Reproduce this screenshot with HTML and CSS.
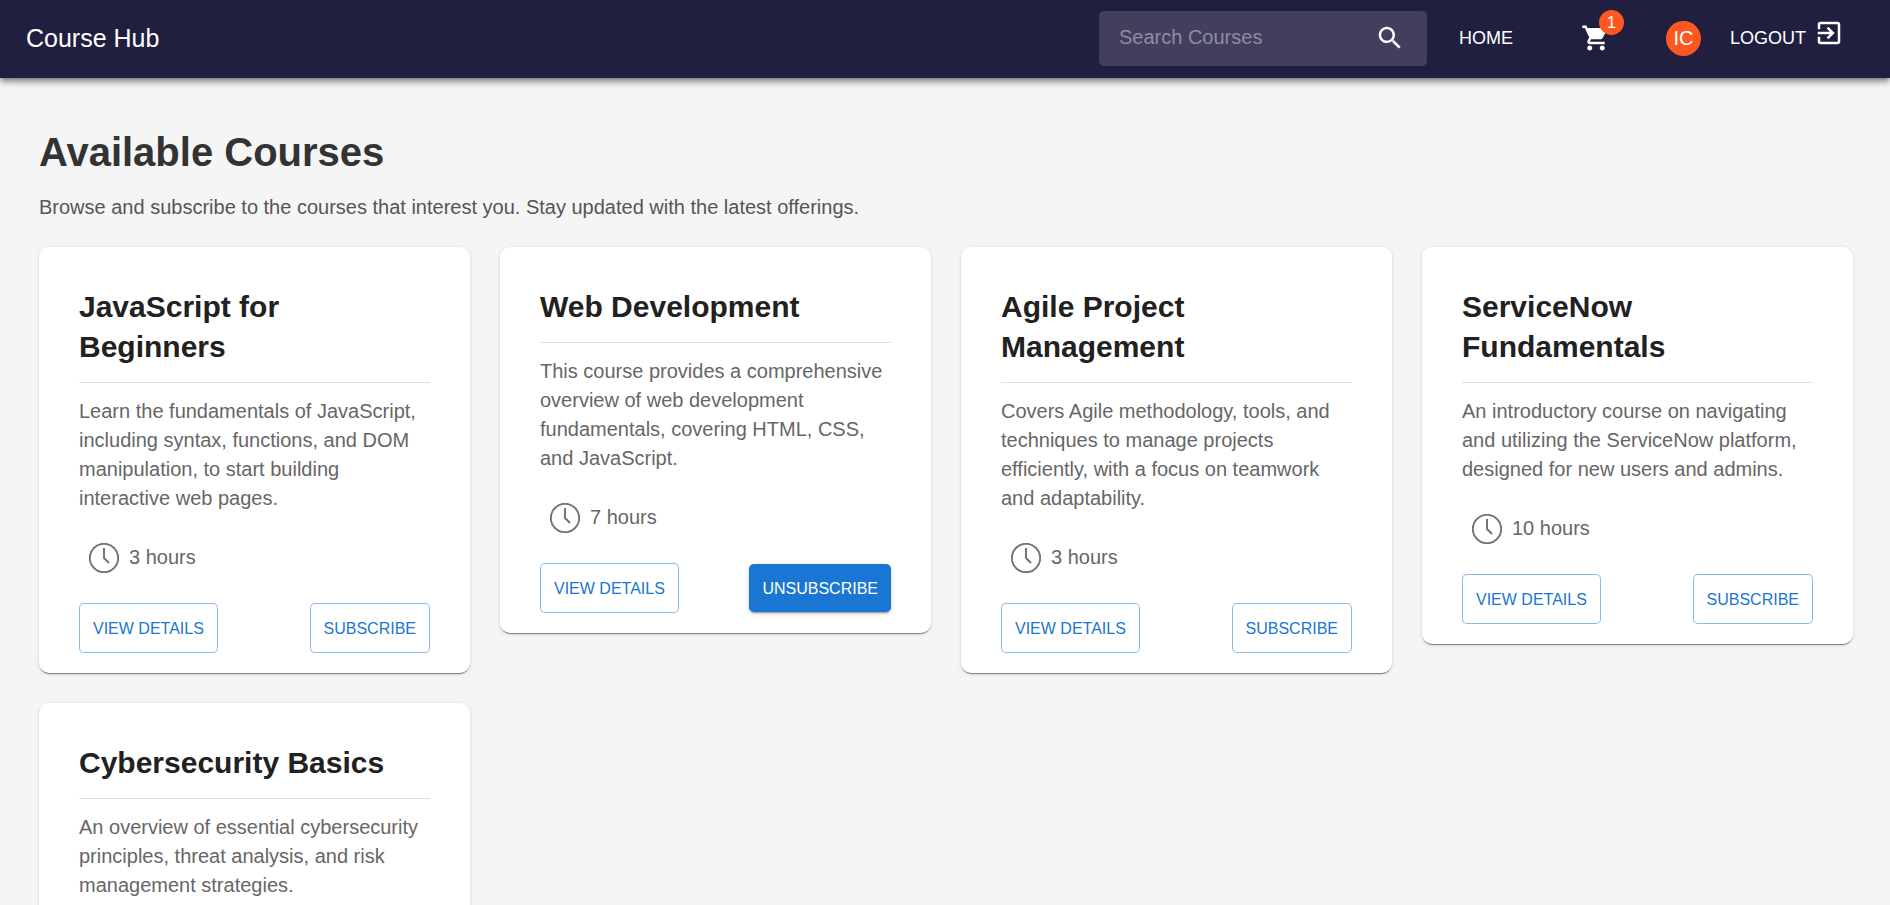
FILE: index.html
```html
<!DOCTYPE html>
<html lang="en">
<head>
<meta charset="utf-8">
<meta name="viewport" content="width=device-width, initial-scale=1">
<title>Course Hub</title>
<link rel="stylesheet" href="styles.css">
</head>
<body>
<svg class="sprite" aria-hidden="true">
  <symbol id="clock" viewBox="0 0 30 30"><circle cx="15" cy="15" r="14.2"/><path d="M15 5v10l5 5"/></symbol>
</svg>
<header class="appbar">
  <a class="brand" href="#">Course Hub</a>
  <form class="search" role="search">
    <input class="search-input" type="text" placeholder="Search Courses" aria-label="Search Courses">
    <button class="icon-button" type="button" aria-label="Search">
      <svg class="icon" viewBox="0 0 24 24"><path d="M15.5 14h-.79l-.28-.27C15.41 12.59 16 11.11 16 9.5 16 5.91 13.09 3 9.5 3S3 5.91 3 9.5 5.91 16 9.5 16c1.61 0 3.09-.59 4.23-1.57l.27.28v.79l5 4.99L20.49 19l-4.99-5zm-6 0C7.01 14 5 11.99 5 9.5S7.01 5 9.5 5 14 7.01 14 9.5 11.99 14 9.5 14z"/></svg>
    </button>
  </form>
  <nav class="nav">
    <a class="nav-link" href="#">HOME</a>
    <a class="cart" href="#" aria-label="Cart">
      <svg class="icon" viewBox="0 0 24 24"><path d="M7 18c-1.1 0-1.99.9-1.99 2S5.9 22 7 22s2-.9 2-2-.9-2-2-2zM1 2v2h2l3.6 7.59-1.35 2.45c-.16.28-.25.61-.25.96 0 1.1.9 2 2 2h12v-2H7.42c-.14 0-.25-.11-.25-.25l.03-.12.9-1.63h7.45c.75 0 1.41-.41 1.75-1.03l3.58-6.49c.08-.14.12-.31.12-.48 0-.55-.45-1-1-1H5.21l-.94-2H1zm16 16c-1.1 0-1.99.9-1.99 2s.89 2 1.99 2 2-.9 2-2-.9-2-2-2z"/></svg>
      <span class="badge">1</span>
    </a>
    <span class="avatar">IC</span>
    <a class="nav-link logout" href="#">LOGOUT
      <svg class="icon" viewBox="0 0 24 24"><path d="M10.09 15.59 11.5 17l5-5-5-5-1.41 1.41L12.67 11H3v2h9.67l-2.58 2.59zM19 3H5c-1.11 0-2 .9-2 2v4h2V5h14v14H5v-4H3v4c0 1.1.89 2 2 2h14c1.1 0 2-.9 2-2V5c0-1.1-.9-2-2-2z"/></svg>
    </a>
  </nav>
</header>
<main class="page">
  <h1 class="page-title">Available Courses</h1>
  <p class="page-intro">Browse and subscribe to the courses that interest you. Stay updated with the latest offerings.</p>
  <div class="grid">
    <article class="card">
      <h2 class="card-title">JavaScript for Beginners</h2>
      <p class="card-text">Learn the fundamentals of JavaScript, including syntax, functions, and DOM manipulation, to start building interactive web pages.</p>
      <div class="duration"><svg class="clock"><use href="#clock"/></svg>3 hours</div>
      <div class="actions"><button class="btn" type="button">VIEW DETAILS</button><button class="btn" type="button">SUBSCRIBE</button></div>
    </article>
    <article class="card">
      <h2 class="card-title">Web Development</h2>
      <p class="card-text">This course provides a comprehensive overview of web development fundamentals, covering HTML, CSS, and JavaScript.</p>
      <div class="duration"><svg class="clock"><use href="#clock"/></svg>7 hours</div>
      <div class="actions"><button class="btn" type="button">VIEW DETAILS</button><button class="btn btn-filled" type="button">UNSUBSCRIBE</button></div>
    </article>
    <article class="card">
      <h2 class="card-title">Agile Project Management</h2>
      <p class="card-text">Covers Agile methodology, tools, and techniques to manage projects efficiently, with a focus on teamwork and adaptability.</p>
      <div class="duration"><svg class="clock"><use href="#clock"/></svg>3 hours</div>
      <div class="actions"><button class="btn" type="button">VIEW DETAILS</button><button class="btn" type="button">SUBSCRIBE</button></div>
    </article>
    <article class="card">
      <h2 class="card-title">ServiceNow Fundamentals</h2>
      <p class="card-text">An introductory course on navigating and utilizing the ServiceNow platform, designed for new users and admins.</p>
      <div class="duration"><svg class="clock"><use href="#clock"/></svg>10 hours</div>
      <div class="actions"><button class="btn" type="button">VIEW DETAILS</button><button class="btn" type="button">SUBSCRIBE</button></div>
    </article>
    <article class="card">
      <h2 class="card-title">Cybersecurity Basics</h2>
      <p class="card-text">An overview of essential cybersecurity principles, threat analysis, and risk management strategies.</p>
    </article>
  </div>
</main>
</body>
</html>
```

FILE: styles.css
```css
* {
  box-sizing: border-box;
}

html {
  scrollbar-width: none;
}

body {
  margin: 0;
  background: #f5f5f5;
  color: #212121;
  font-family: "Liberation Sans", Arial, sans-serif;
  font-size: 20px;
}

button,
input {
  font: inherit;
}

.sprite {
  display: none;
}

.appbar {
  position: sticky;
  top: 0;
  z-index: 1;
  display: flex;
  align-items: center;
  min-height: 78px;
  padding: 0 46px 2px 26px;
  background: #211f40;
  color: #fff;
  box-shadow: 0 2px 5px -1px rgba(0, 0, 0, 0.4), 0 5px 6px rgba(0, 0, 0, 0.2), 0 1px 12px rgba(0, 0, 0, 0.15);
}

.brand {
  color: inherit;
  font-size: 25px;
  line-height: 40px;
  text-decoration: none;
}

.search {
  display: flex;
  align-items: center;
  width: 328px;
  height: 55px;
  margin-left: auto;
  padding: 0 22px 0 20px;
  border-radius: 5px;
  background: #413f5c;
}

.search-input {
  flex: 1;
  min-width: 0;
  padding: 0 0 2px;
  border: 0;
  outline: 0;
  background: none;
  color: #fff;
}

.search-input::placeholder {
  color: #8f8d9f;
}

.icon-button {
  display: flex;
  padding: 0;
  border: 0;
  background: none;
  color: inherit;
}

.icon {
  flex: none;
  width: 30px;
  height: 30px;
  fill: currentColor;
}

.nav {
  display: flex;
  align-items: center;
}

.nav-link {
  margin-left: 32px;
  color: inherit;
  font-size: 18px;
  line-height: 40px;
  text-decoration: none;
}

.cart {
  position: relative;
  display: flex;
  margin-left: 68px;
  color: inherit;
}

.badge {
  position: absolute;
  top: -13px;
  right: -13px;
  width: 25px;
  height: 25px;
  border-radius: 50%;
  background: #ff5722;
  font-size: 16px;
  line-height: 25px;
  text-align: center;
}

.avatar {
  width: 35px;
  height: 35px;
  margin-left: 55px;
  border-radius: 50%;
  background: #ff5722;
  line-height: 35px;
  text-align: center;
}

.logout {
  display: flex;
  gap: 8px;
  margin-left: 29px;
}

.page {
  padding: 46px 37px 45px 39px;
}

.page-title {
  margin: 0;
  color: #333;
  font-size: 40px;
  line-height: 56px;
}

.page-intro {
  margin: 13px 0 26px;
  color: #555;
  line-height: 28px;
}

.grid {
  display: grid;
  grid-template-columns: repeat(4, 1fr);
  align-items: start;
  gap: 30px;
}

.card {
  padding: 40px 40px 20px;
  border-radius: 10px;
  background: #fff;
  box-shadow: 0 2px 1px -1px rgba(0, 0, 0, 0.35), 0 1px 1px rgba(0, 0, 0, 0.14), 0 1px 4px rgba(0, 0, 0, 0.12);
}

.card-title {
  margin: 0;
  padding-bottom: 15px;
  border-bottom: 1px solid #e0e0e0;
  font-size: 30px;
  line-height: 40px;
}

.card-text {
  margin: 14px 0 30px;
  color: #666;
  line-height: 29px;
}

.duration {
  display: flex;
  align-items: flex-start;
  gap: 10px;
  margin: 0 0 30px 10px;
  color: #666;
  line-height: 28px;
}

.clock {
  width: 30px;
  height: 30px;
  fill: none;
  stroke: #757575;
  stroke-width: 2;
}

.actions {
  display: flex;
  align-items: center;
  justify-content: space-between;
}

.btn {
  height: 50px;
  padding: 2px 13px 0;
  border: 1px solid rgba(25, 118, 210, 0.5);
  border-radius: 5px;
  background: #fff;
  color: #1976d2;
  font-size: 16px;
}

.btn-filled {
  height: 48px;
  border: 0;
  background: #1976d2;
  color: #fff;
  box-shadow: 0 3px 1px -2px rgba(0, 0, 0, 0.2), 0 2px 2px rgba(0, 0, 0, 0.14), 0 1px 6px rgba(0, 0, 0, 0.12);
}
```
